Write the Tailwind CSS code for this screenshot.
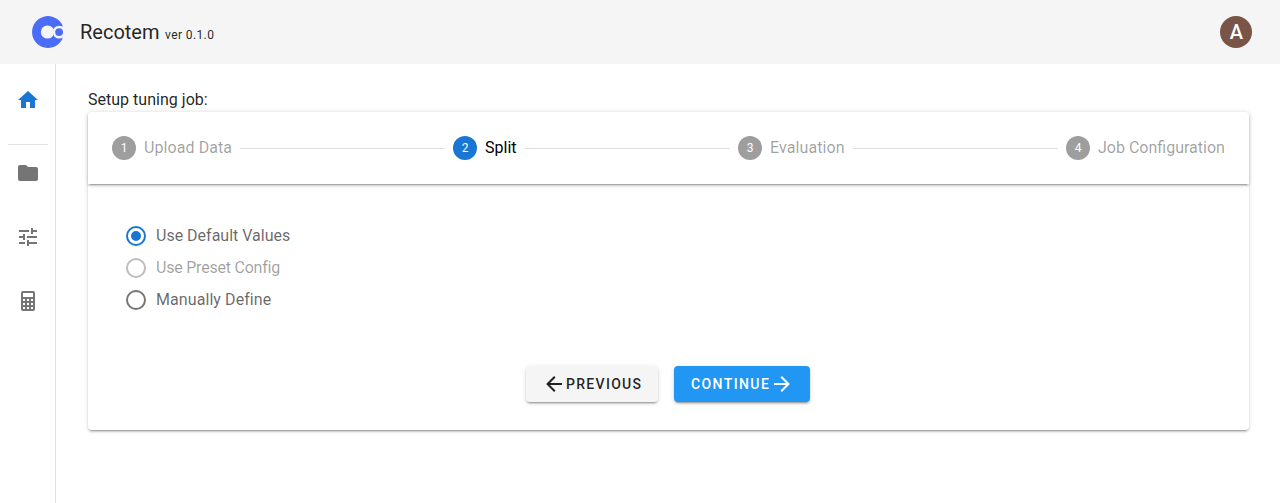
<!DOCTYPE html>
<html lang="en">
<head>
<meta charset="utf-8">
<title>Recotem</title>
<script src="https://cdn.jsdelivr.net/npm/@tailwindcss/browser@4"></script>
</head>
<body class="flex h-screen flex-col overflow-hidden bg-white font-['Roboto',sans-serif] text-base leading-6 text-black/87 antialiased">
  <header class="flex h-16 shrink-0 items-center bg-[#f5f5f5] pr-7 pl-8">
    <svg class="size-8" viewBox="0 0 32 32">
      <path fill="#4a6cf7" d="M30.4 9A16 16 0 1 0 30.4 23Z"/>
      <circle cx="15.5" cy="16" r="6.6" fill="#f5f5f5"/>
      <circle cx="27.1" cy="16.1" r="6.4" fill="#f5f5f5"/>
      <circle cx="27.1" cy="16.1" r="3.9" fill="#4a6cf7"/>
    </svg>
    <div class="ml-4 flex items-baseline">
      <h1 class="text-xl leading-8 font-normal">Recotem</h1>
      <span class="ml-[5.5px] text-xs tracking-[0.4px]">ver 0.1.0</span>
    </div>
    <div class="ml-auto flex size-8 items-center justify-center rounded-full bg-[#795548] pl-px text-xl font-medium text-white">A</div>
  </header>
  <div class="flex min-h-0 flex-1">
    <nav class="flex w-14 shrink-0 flex-col items-center border-r border-black/12 pt-6 text-[#757575]">
      <svg class="ml-px size-6 fill-[#1976d2]" viewBox="0 0 24 24"><path d="M10,20V14H14V20H19V12H22L12,3L2,12H5V20H10Z"/></svg>
      <div class="mt-8 ml-px h-px w-10 bg-black/12"></div>
      <svg class="mt-4 ml-px size-6 fill-current" viewBox="0 0 24 24"><path d="M10,4H4C2.89,4 2,4.89 2,6V18A2,2 0 0,0 4,20H20A2,2 0 0,0 22,18V8C22,6.89 21.1,6 20,6H12L10,4Z"/></svg>
      <svg class="mt-10 ml-px size-6 fill-current" viewBox="0 0 24 24"><path d="M3,17V19H9V17H3M3,5V7H13V5H3M13,21V19H21V17H13V15H11V21H13M7,9V11H3V13H7V15H9V9H7M21,13V11H11V13H21M15,9H17V7H21V5H17V3H15V9Z"/></svg>
      <svg class="mt-10 ml-px size-6 fill-current" viewBox="0 0 24 24"><path d="M7,2H17A2,2 0 0,1 19,4V20A2,2 0 0,1 17,22H7A2,2 0 0,1 5,20V4A2,2 0 0,1 7,2M7,4V8H17V4H7M7,10V12H9V10H7M11,10V12H13V10H11M15,10V12H17V10H15M7,14V16H9V14H7M11,14V16H13V14H11M15,14V16H17V14H15M7,18V20H9V18H7M11,18V20H13V18H11M15,18V20H17V18H15Z"/></svg>
    </nav>
    <main class="min-w-0 flex-1 pt-6 pr-[31px] pl-8">
      <p class="tracking-[0.02px]">Setup tuning job:</p>
      <section class="h-[318px] rounded shadow-[0_3px_1px_-2px_rgba(0,0,0,0.2),0_2px_2px_0_rgba(0,0,0,0.14),0_1px_5px_0_rgba(0,0,0,0.12)]">
        <ol class="flex h-[72px] items-center gap-2 rounded-t px-6 text-black/38 shadow-[0_3px_1px_-2px_rgba(0,0,0,0.2),0_2px_2px_0_rgba(0,0,0,0.14),0_1px_5px_0_rgba(0,0,0,0.12)]">
          <li class="flex w-[120px] items-center gap-2 whitespace-nowrap"><span class="flex size-6 shrink-0 items-center justify-center rounded-full bg-[#9e9e9e] text-xs text-white">1</span><span class="tracking-[0.08px]">Upload Data</span></li>
          <li class="h-px flex-1 bg-black/12"></li>
          <li class="flex w-16 items-center gap-2 text-black"><span class="flex size-6 items-center justify-center rounded-full bg-[#1976d2] text-xs text-white">2</span>Split</li>
          <li class="h-px flex-1 bg-black/12"></li>
          <li class="flex w-[107px] items-center gap-2"><span class="flex size-6 items-center justify-center rounded-full bg-[#9e9e9e] text-xs text-white">3</span><span class="tracking-[0.1px]">Evaluation</span></li>
          <li class="h-px flex-1 bg-black/12"></li>
          <li class="flex w-[159px] items-center gap-2 whitespace-nowrap"><span class="flex size-6 shrink-0 items-center justify-center rounded-full bg-[#9e9e9e] text-xs text-white">4</span>Job Configuration</li>
        </ol>
        <div class="flex flex-col gap-2 pt-10 pl-9 text-black/60">
          <div class="flex items-center gap-2">
            <svg class="size-6 fill-[#1976d2]" viewBox="0 0 24 24"><path d="M12,20A8,8 0 0,1 4,12A8,8 0 0,1 12,4A8,8 0 0,1 20,12A8,8 0 0,1 12,20M12,2A10,10 0 0,0 2,12A10,10 0 0,0 12,22A10,10 0 0,0 22,12A10,10 0 0,0 12,2M12,7A5,5 0 0,0 7,12A5,5 0 0,0 12,17A5,5 0 0,0 17,12A5,5 0 0,0 12,7Z"/></svg>
            Use Default Values
          </div>
          <div class="flex items-center gap-2 text-black/38">
            <svg class="size-6 fill-black/26" viewBox="0 0 24 24"><path d="M12,20A8,8 0 0,1 4,12A8,8 0 0,1 12,4A8,8 0 0,1 20,12A8,8 0 0,1 12,20M12,2A10,10 0 0,0 2,12A10,10 0 0,0 12,22A10,10 0 0,0 22,12A10,10 0 0,0 12,2Z"/></svg>
            <span class="tracking-[-0.22px]">Use Preset Config</span>
          </div>
          <div class="flex items-center gap-2">
            <svg class="size-6 fill-black/54" viewBox="0 0 24 24"><path d="M12,20A8,8 0 0,1 4,12A8,8 0 0,1 12,4A8,8 0 0,1 20,12A8,8 0 0,1 12,20M12,2A10,10 0 0,0 2,12A10,10 0 0,0 12,22A10,10 0 0,0 22,12A10,10 0 0,0 12,2Z"/></svg>
            <span class="tracking-[0.08px]">Manually Define</span>
          </div>
        </div>
        <div class="mt-[54px] mr-px flex justify-center gap-4 text-sm font-medium tracking-[1.3px]">
          <button class="flex h-9 w-[132px] items-center rounded bg-[#f5f5f5] pl-4 shadow-[0_3px_1px_-2px_rgba(0,0,0,0.2),0_2px_2px_0_rgba(0,0,0,0.14),0_1px_5px_0_rgba(0,0,0,0.12)]">
            <svg class="size-6 fill-current" viewBox="0 0 24 24"><path d="M20,11V13H8L13.5,18.5L12.08,19.92L4.16,12L12.08,4.08L13.5,5.5L8,11H20Z"/></svg>PREVIOUS
          </button>
          <button class="flex h-9 w-[136px] items-center rounded bg-[#2196f3] pl-[17px] tracking-[1.4px] text-white shadow-[0_3px_1px_-2px_rgba(0,0,0,0.2),0_2px_2px_0_rgba(0,0,0,0.14),0_1px_5px_0_rgba(0,0,0,0.12)]">
            CONTINUE<svg class="size-6 fill-current" viewBox="0 0 24 24"><path d="M4,11V13H16L10.5,18.5L11.92,19.92L19.84,12L11.92,4.08L10.5,5.5L16,11H4Z"/></svg>
          </button>
        </div>
      </section>
    </main>
  </div>
</body>
</html>
